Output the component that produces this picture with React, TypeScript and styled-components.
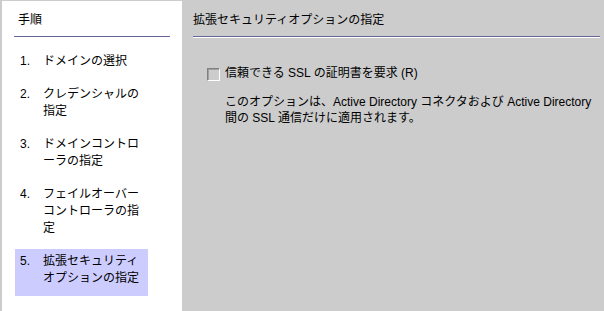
import styled, { createGlobalStyle } from "styled-components";

const GlobalStyle = createGlobalStyle`
  html, body {
    margin: 0;
    padding: 0;
    background: #cccccc;
  }
  body {
    font-family: "Liberation Sans", "Noto Sans CJK JP", sans-serif;
    font-size: 12px;
    color: #000000;
  }
`;

const Page = styled.div`
  display: flex;
  width: 604px;
  height: 311px;
  background: #cccccc;
  overflow: hidden;
`;

const StepsPanel = styled.nav`
  width: 180px;
  margin: 1px 0 0 2px;
  background: #ffffff;
  display: flex;
  flex-direction: column;
`;

const ContentPanel = styled.main`
  flex: 1;
  padding: 0 4px 0 11px;
  display: flex;
  flex-direction: column;
`;

const PanelHeading = styled.h2<{ $etched?: boolean }>`
  margin: 0;
  font-size: 12px;
  font-weight: normal;
  line-height: 17px;
  padding: ${(props) => (props.$etched ? "12px 0 0 0" : "11px 0 0 16px")};
`;

const Rule = styled.div<{ $etched?: boolean }>`
  height: 1px;
  margin: ${(props) => (props.$etched ? "7px 0 1px 0" : "7px 12px 12px 12px")};
  background: #666699;
  box-shadow: ${(props) => (props.$etched ? "0 1px 0 #ffffff" : "none")};
`;

const StepList = styled.ol`
  list-style: none;
  margin: 0;
  padding: 0 0 0 13px;
  display: flex;
  flex-direction: column;
  gap: 3px;
`;

const Step = styled.li<{ $current?: boolean }>`
  display: flex;
  width: 133px;
  box-sizing: border-box;
  padding: 4px 0 9px 5px;
  line-height: 17px;
  background: ${(props) => (props.$current ? "#ccccff" : "transparent")};
`;

const StepNumber = styled.span`
  width: 23px;
  flex-shrink: 0;
`;

const StepText = styled.span`
  display: flex;
  flex-direction: column;
`;

const OptionArea = styled.section`
  padding: 27px 0 0 14px;
`;

const CheckRow = styled.label`
  display: flex;
  align-items: center;
  gap: 5px;
  line-height: 17px;
`;

const CheckBox = styled.span`
  width: 13px;
  height: 13px;
  box-sizing: border-box;
  border-top: 1px solid #808080;
  border-left: 1px solid #808080;
  border-right: 1px solid #ffffff;
  border-bottom: 1px solid #ffffff;
  box-shadow: inset 1px 1px 0 #a0a0a0;
  background: #cccccc;
  margin-top: 1px;
`;

const Note = styled.p`
  margin: 12px 0 0 18px;
  line-height: 16px;
`;

const steps = [
  ["ドメインの選択"],
  ["クレデンシャルの", "指定"],
  ["ドメインコントロ", "ーラの指定"],
  ["フェイルオーバー", "コントローラの指", "定"],
  ["拡張セキュリティ", "オプションの指定"],
];

const App = () => (
  <Page>
    <GlobalStyle />
    <StepsPanel>
      <PanelHeading>手順</PanelHeading>
      <Rule />
      <StepList>
        {steps.map((lines, i) => (
          <Step key={i} $current={i === steps.length - 1}>
            <StepNumber>{i + 1}.</StepNumber>
            <StepText>
              {lines.map((line) => (
                <span key={line}>{line}</span>
              ))}
            </StepText>
          </Step>
        ))}
      </StepList>
    </StepsPanel>
    <ContentPanel>
      <PanelHeading $etched>拡張セキュリティオプションの指定</PanelHeading>
      <Rule $etched />
      <OptionArea>
        <CheckRow>
          <CheckBox />
          信頼できる SSL の証明書を要求 (R)
        </CheckRow>
        <Note>
          このオプションは、Active Directory コネクタおよび Active Directory
          <br />
          間の SSL 通信だけに適用されます。
        </Note>
      </OptionArea>
    </ContentPanel>
  </Page>
);

export default App;
